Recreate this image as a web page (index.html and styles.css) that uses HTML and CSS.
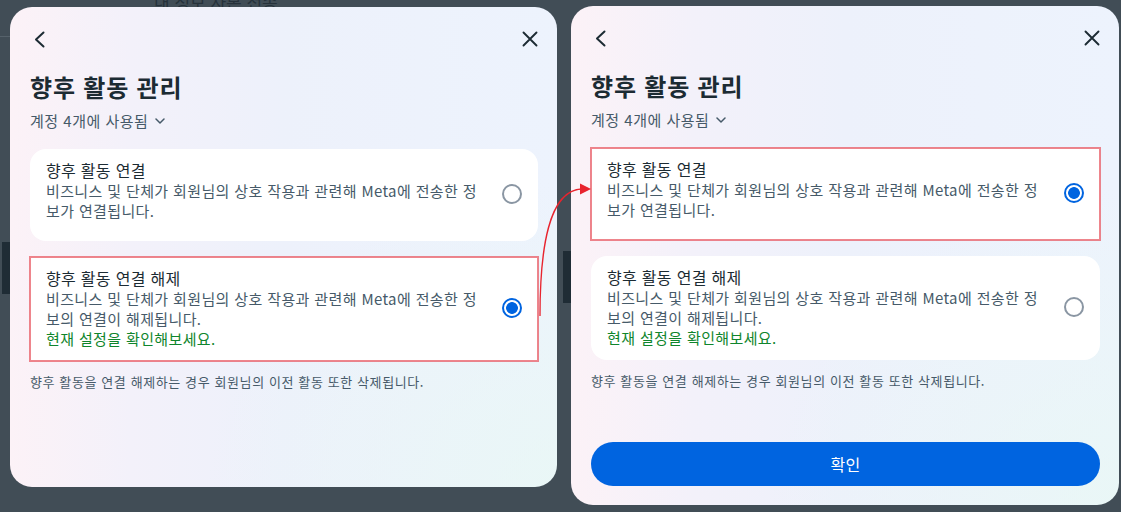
FILE: index.html
```html
<!DOCTYPE html>
<html lang="ko">
<head>
<meta charset="utf-8">
<title>향후 활동 관리</title>
<link rel="stylesheet" href="styles.css">
</head>
<body>
<div class="backdrop">
  <span class="backdrop__title">내 정보 사본 전송</span>
  <span class="backdrop__block backdrop__block--left"></span>
  <span class="backdrop__block backdrop__block--mid"></span>
  <span class="backdrop__line"></span>
</div>

<main class="stage">
  <section class="dialog dialog--left">
    <header class="dialog__bar">
      <svg class="icon icon--back" viewBox="0 0 16 17" width="16" height="17"><path d="M11.5 1.5 L4 8.5 L11.5 15.5"/></svg>
      <svg class="icon icon--close" viewBox="0 0 16 16" width="16" height="16"><path d="M1.5 1.5 L14.5 14.5 M14.5 1.5 L1.5 14.5"/></svg>
    </header>
    <h1 class="dialog__title">향후 활동 관리</h1>
    <p class="dialog__scope">계정 4개에 사용됨 <svg class="chev" viewBox="0 0 10 6" width="10" height="6"><path d="M1 1 L5 5 L9 1"/></svg></p>
    <div class="options">
      <div class="option">
        <div class="option__text">
          <div class="option__title">향후 활동 연결</div>
          <div class="option__desc">비즈니스 및 단체가 회원님의 상호 작용과 관련해 Meta에 전송한 정보가 연결됩니다.</div>
        </div>
        <span class="radio"></span>
      </div>
      <div class="option option--marked">
        <div class="option__text">
          <div class="option__title">향후 활동 연결 해제</div>
          <div class="option__desc">비즈니스 및 단체가 회원님의 상호 작용과 관련해 Meta에 전송한 정보의 연결이 해제됩니다.</div>
          <div class="option__link">현재 설정을 확인해보세요.</div>
        </div>
        <span class="radio radio--on"></span>
      </div>
    </div>
    <p class="dialog__note">향후 활동을 연결 해제하는 경우 회원님의 이전 활동 또한 삭제됩니다.</p>
  </section>

  <section class="dialog dialog--right">
    <header class="dialog__bar">
      <svg class="icon icon--back" viewBox="0 0 16 17" width="16" height="17"><path d="M11.5 1.5 L4 8.5 L11.5 15.5"/></svg>
      <svg class="icon icon--close" viewBox="0 0 16 16" width="16" height="16"><path d="M1.5 1.5 L14.5 14.5 M14.5 1.5 L1.5 14.5"/></svg>
    </header>
    <h1 class="dialog__title">향후 활동 관리</h1>
    <p class="dialog__scope">계정 4개에 사용됨 <svg class="chev" viewBox="0 0 10 6" width="10" height="6"><path d="M1 1 L5 5 L9 1"/></svg></p>
    <div class="options">
      <div class="option option--marked">
        <div class="option__text">
          <div class="option__title">향후 활동 연결</div>
          <div class="option__desc">비즈니스 및 단체가 회원님의 상호 작용과 관련해 Meta에 전송한 정보가 연결됩니다.</div>
        </div>
        <span class="radio radio--on"></span>
      </div>
      <div class="option">
        <div class="option__text">
          <div class="option__title">향후 활동 연결 해제</div>
          <div class="option__desc">비즈니스 및 단체가 회원님의 상호 작용과 관련해 Meta에 전송한 정보의 연결이 해제됩니다.</div>
          <div class="option__link">현재 설정을 확인해보세요.</div>
        </div>
        <span class="radio"></span>
      </div>
    </div>
    <p class="dialog__note">향후 활동을 연결 해제하는 경우 회원님의 이전 활동 또한 삭제됩니다.</p>
    <button class="confirm" type="button">확인</button>
  </section>
</main>

<svg class="annotation" viewBox="0 0 1121 512" width="1121" height="512">
  <path class="annotation__line" d="M540 316 C 540 250, 548 190, 582 189"/>
  <path class="annotation__head" d="M591 189 L580 183.5 L580 194.5 Z"/>
</svg>
</body>
</html>
```

FILE: styles.css
```css
* { box-sizing: border-box; }

html, body {
  margin: 0;
  width: 1121px;
  height: 512px;
  overflow: hidden;
}

body {
  position: relative;
  background: #414d56;
  font-family: "Noto Sans CJK KR", "Noto Sans", sans-serif;
  color: #1c2b33;
}

/* page behind the dialogs */
.backdrop {
  position: absolute;
  inset: 0;
  z-index: 0;
}
.backdrop__title {
  position: absolute;
  left: 154px;
  top: -11px;
  font-size: 17px;
  color: #26323b;
  white-space: nowrap;
}
.backdrop__block {
  position: absolute;
  background: #1f2c35;
}
.backdrop__block--left { left: 2px; top: 242px; width: 8px; height: 52px; }
.backdrop__block--mid { left: 563px; top: 251px; width: 8px; height: 52px; }
.backdrop__line {
  position: absolute;
  left: 0;
  top: 36px;
  width: 10px;
  height: 1px;
  background: #56626b;
}

.stage {
  position: relative;
  z-index: 1;
  display: flex;
  align-items: flex-start;
  gap: 14px;
  padding-left: 10px;
}

.dialog {
  display: flex;
  flex-direction: column;
  padding: 20px 19px 19px 20px;
  border-radius: 22px;
  background:
    radial-gradient(ellipse at 100% 100%, rgba(232, 248, 244, 0.75), rgba(232, 248, 244, 0) 45%),
    linear-gradient(90deg, #fcf2f7 0%, #f3f1fa 22%, #edf1fb 50%, #edf3fd 100%);
}
.dialog--left { width: 547px; height: 480px; margin-top: 7px; }
.dialog--right { width: 548px; height: 499px; margin-top: 6px; }

.dialog__bar {
  height: 24px;
  display: flex;
  align-items: center;
  justify-content: space-between;
}
.icon {
  fill: none;
  stroke: #1c2b33;
  stroke-width: 2;
  stroke-linecap: round;
  stroke-linejoin: round;
}
.icon--back { margin-left: 2px; }
.icon--close { stroke-width: 1.9; }

.dialog__title {
  margin: 20px 0 0;
  font-size: 24px;
  line-height: 32px;
  font-weight: 700;
  letter-spacing: 0.8px;
  color: #1c2b33;
}

.dialog__scope {
  margin: 8px 0 0;
  display: flex;
  align-items: center;
  gap: 7px;
  font-size: 15px;
  line-height: 20px;
  letter-spacing: 0.5px;
  color: #465a69;
}
.chev {
  fill: none;
  stroke: #465a69;
  stroke-width: 1.5;
  stroke-linecap: round;
  stroke-linejoin: round;
}

.options {
  margin-top: 18px;
  display: flex;
  flex-direction: column;
  gap: 16px;
}

.option {
  display: flex;
  align-items: center;
  gap: 12px;
  min-height: 92px;
  padding: 10px 16px 12px;
  background: #ffffff;
  border-radius: 16px;
}
.option--marked {
  outline: 2px solid rgba(232, 86, 96, 0.72);
  outline-offset: -1px;
  border-radius: 0;
}
.option__text {
  flex: 1;
  align-self: flex-start;
}
.option__title {
  font-size: 16px;
  line-height: 22px;
  letter-spacing: 0.3px;
  color: #1c2b33;
}
.option__desc {
  font-size: 15px;
  line-height: 20px;
  letter-spacing: 0.37px;
  color: #465a69;
}
.option__link {
  font-size: 15px;
  line-height: 20px;
  letter-spacing: 0.37px;
  color: #0f852c;
}

.radio {
  flex: none;
  width: 20px;
  height: 20px;
  border-radius: 50%;
  border: 2px solid #8a96a3;
  background: #fff;
}
.radio--on {
  border-color: #0064e0;
  background: radial-gradient(circle, #0064e0 0 5.5px, #ffffff 6.2px);
}

.dialog__note {
  margin: 12px 0 0;
  font-size: 13px;
  line-height: 18px;
  letter-spacing: 0.6px;
  color: #465a69;
}

.confirm {
  margin-top: auto;
  height: 44px;
  width: 100%;
  border: none;
  border-radius: 22px;
  background: #0064e0;
  color: #ffffff;
  font-family: inherit;
  font-size: 16px;
  letter-spacing: 0.3px;
}

.annotation {
  position: absolute;
  left: 0;
  top: 0;
  z-index: 2;
  pointer-events: none;
}
.annotation__line {
  fill: none;
  stroke: #e8242e;
  stroke-width: 1.3;
}
.annotation__head {
  fill: #e8242e;
}
```
